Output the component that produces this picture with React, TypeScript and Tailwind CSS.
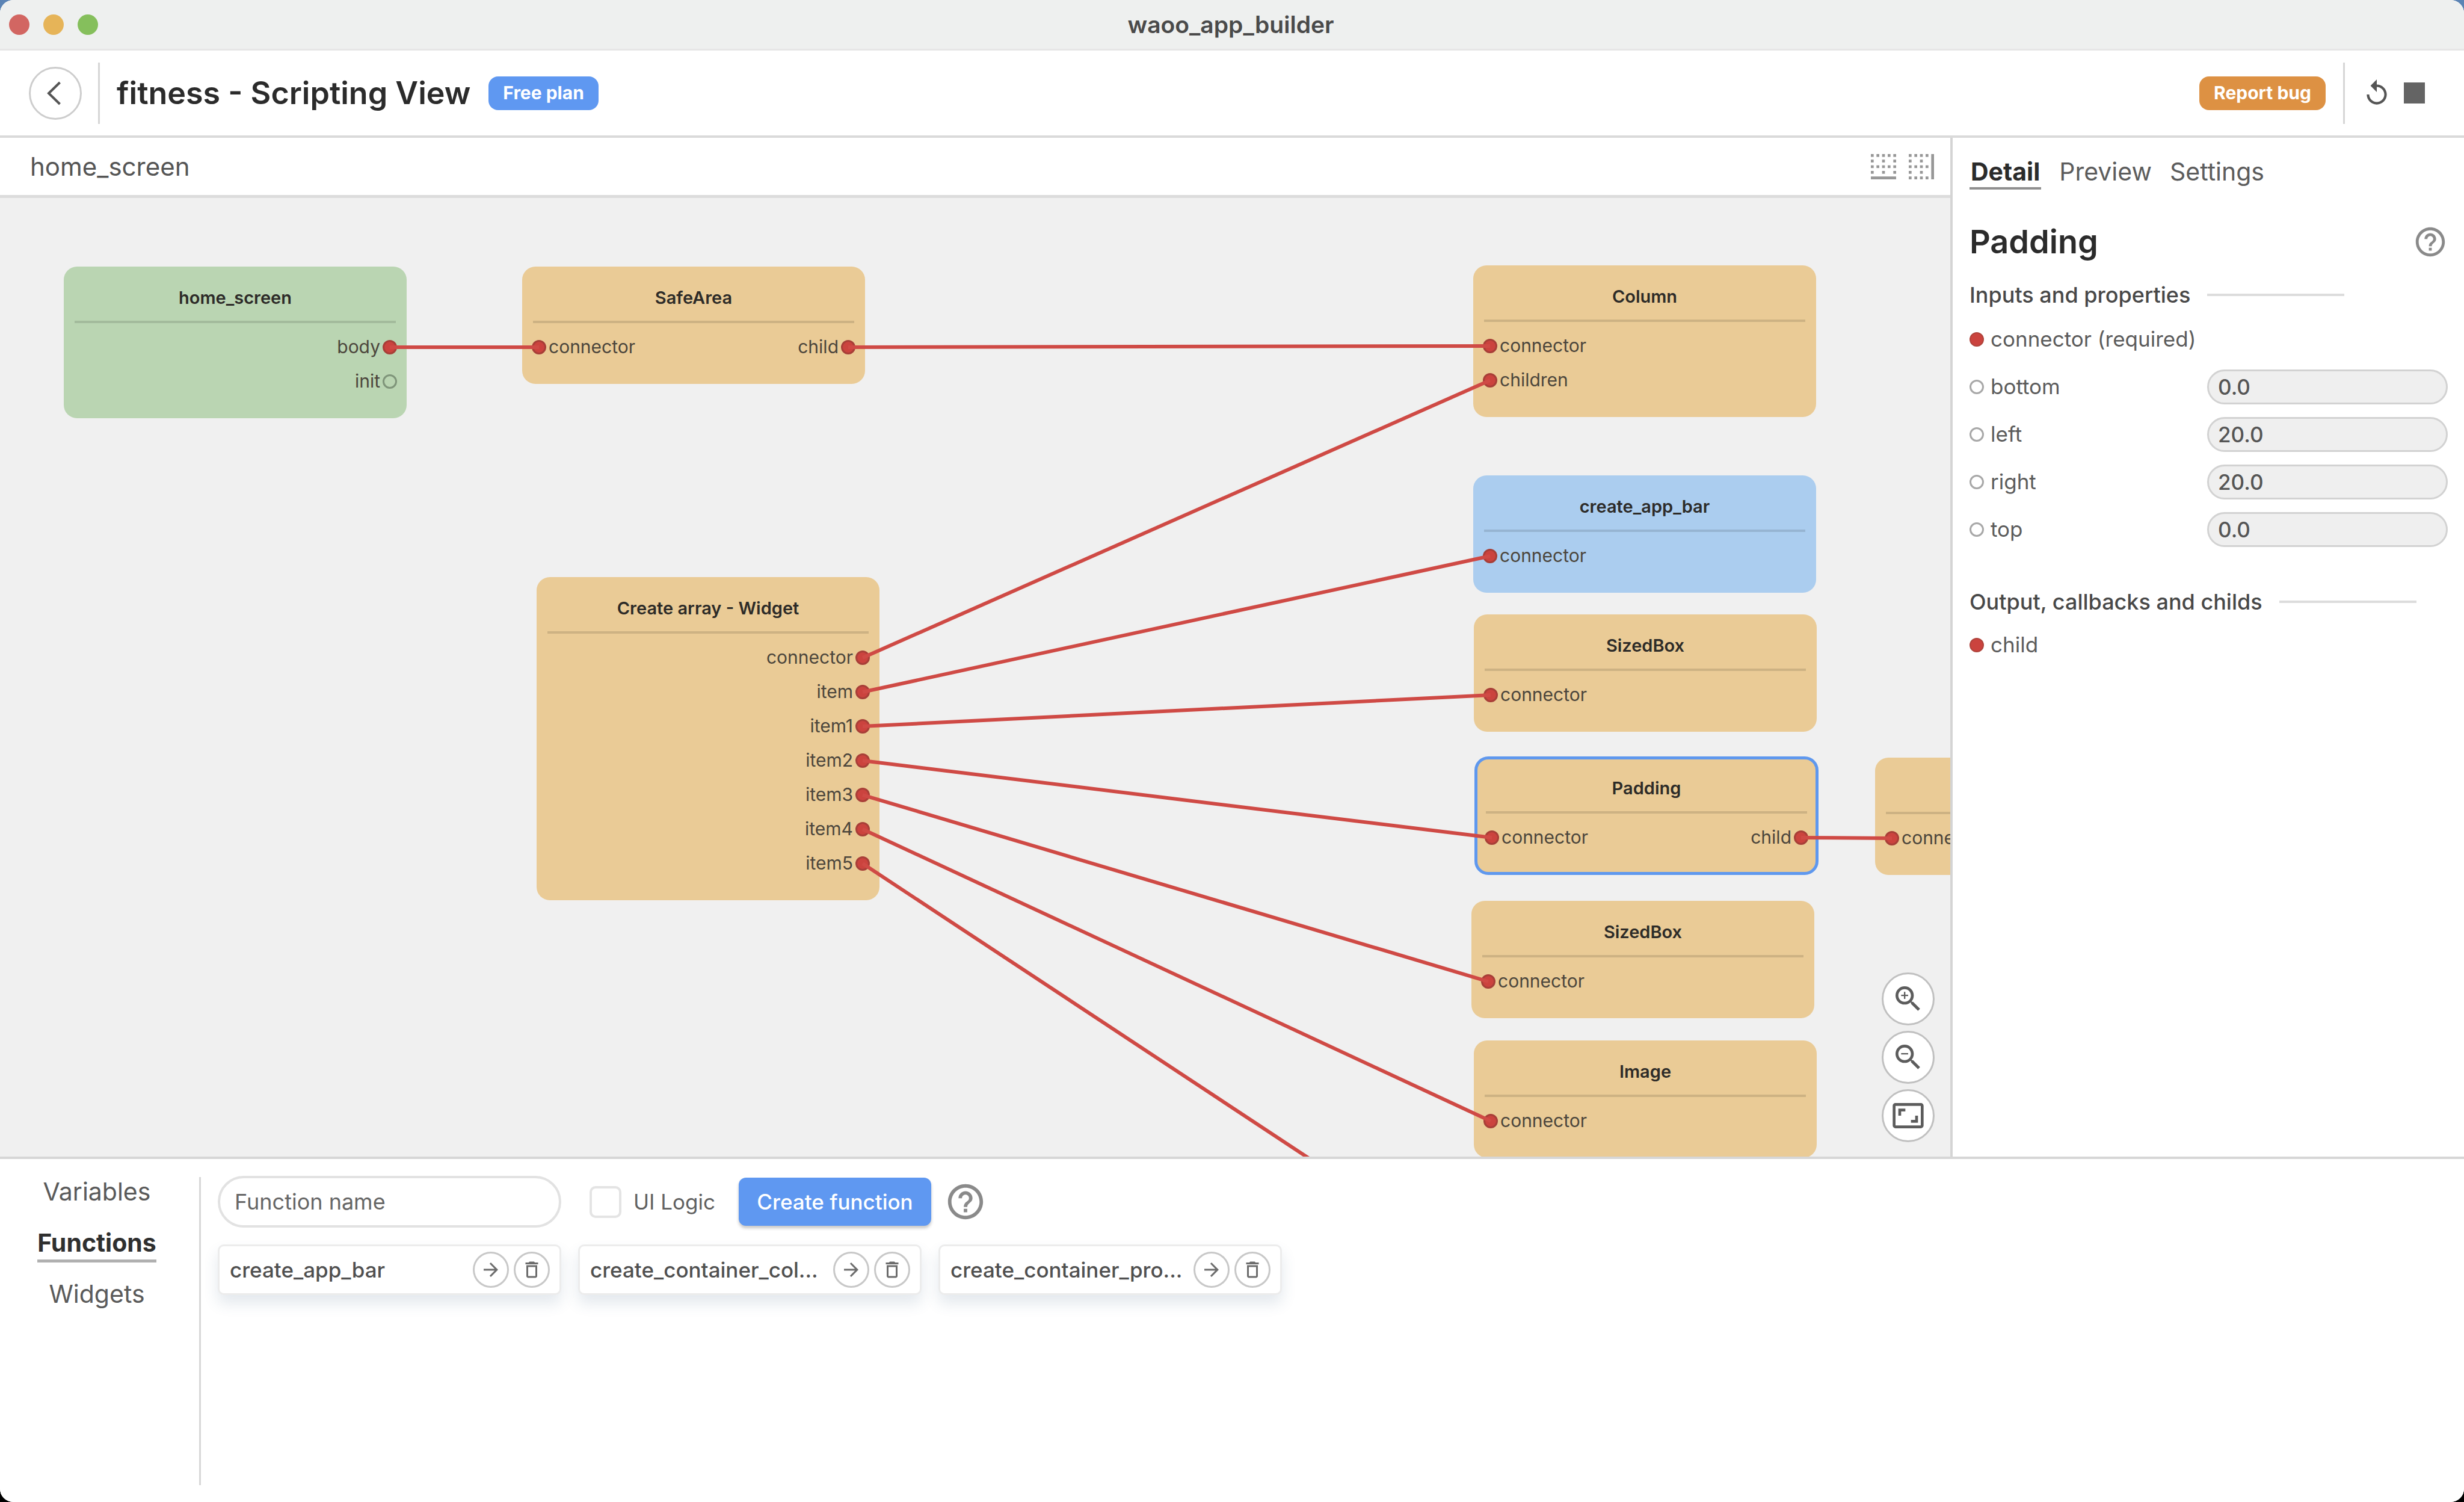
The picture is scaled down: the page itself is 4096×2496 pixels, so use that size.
import React, { useState } from "react";
import {
  MdArrowForward,
  MdAspectRatio,
  MdBorderBottom,
  MdBorderRight,
  MdDeleteOutline,
  MdHelpOutline,
  MdReplay,
  MdZoomIn,
  MdZoomOut,
} from "react-icons/md";

type Port = { name: string; linked?: boolean };

type GraphNode = {
  id: string;
  title?: string;
  x: number;
  y: number;
  tone: "green" | "orange" | "blue";
  selected?: boolean;
  inputs?: Port[];
  outputs?: Port[];
};

const connector: Port[] = [{ name: "connector", linked: true }];

const nodes: GraphNode[] = [
  {
    id: "home",
    title: "home_screen",
    x: 106,
    y: 114,
    tone: "green",
    outputs: [{ name: "body", linked: true }, { name: "init" }],
  },
  {
    id: "safe",
    title: "SafeArea",
    x: 868,
    y: 114,
    tone: "orange",
    inputs: connector,
    outputs: [{ name: "child", linked: true }],
  },
  {
    id: "column",
    title: "Column",
    x: 2449,
    y: 112,
    tone: "orange",
    inputs: [
      { name: "connector", linked: true },
      { name: "children", linked: true },
    ],
  },
  { id: "appbar", title: "create_app_bar", x: 2449, y: 461, tone: "blue", inputs: connector },
  {
    id: "array",
    title: "Create array - Widget",
    x: 892,
    y: 630,
    tone: "orange",
    outputs: ["connector", "item", "item1", "item2", "item3", "item4", "item5"].map((name) => ({
      name,
      linked: true,
    })),
  },
  { id: "sized1", title: "SizedBox", x: 2450, y: 692, tone: "orange", inputs: connector },
  {
    id: "padding",
    title: "Padding",
    x: 2452,
    y: 929,
    tone: "orange",
    selected: true,
    inputs: connector,
    outputs: [{ name: "child", linked: true }],
  },
  { id: "next", x: 3117, y: 930, tone: "orange", inputs: connector },
  { id: "sized2", title: "SizedBox", x: 2446, y: 1168, tone: "orange", inputs: connector },
  { id: "image", title: "Image", x: 2450, y: 1400, tone: "orange", inputs: connector },
];

const edges: [string, number, string, number][] = [
  ["home", 0, "safe", 0],
  ["safe", 0, "column", 0],
  ["array", 0, "column", 1],
  ["array", 1, "appbar", 0],
  ["array", 2, "sized1", 0],
  ["array", 3, "padding", 0],
  ["array", 4, "sized2", 0],
  ["array", 5, "image", 0],
  ["padding", 0, "next", 0],
];

const toneClass = {
  green: "bg-[#bad5b2]",
  orange: "bg-[#eacb96]",
  blue: "bg-[#abcdef]",
};

function portPoint(id: string, index: number, side: "in" | "out") {
  const node = nodes.find((n) => n.id === id)!;
  return { x: node.x + (side === "in" ? 28 : 542), y: node.y + 134 + index * 57 };
}

function PortDot({ linked }: { linked?: boolean }) {
  return (
    <span
      className={
        linked
          ? "size-6 shrink-0 rounded-full border-[3px] border-[#a83f38] bg-[#cb433e]"
          : "size-6 shrink-0 rounded-full border-[3px] border-[#7f957a]"
      }
    />
  );
}

function NodeCard({ node }: { node: GraphNode }) {
  return (
    <section
      className={`absolute w-[570px] rounded-[22px] pb-[33px] text-[30px] ${toneClass[node.tone]} ${
        node.selected ? "outline-[5px] -outline-offset-4 outline-[#5f98ee]" : ""
      }`}
      style={{ left: node.x, top: node.y }}
    >
      <h3 className="flex h-[90px] items-center justify-center pt-3 text-[29px] leading-none font-semibold text-[#2d2b28]">
        {node.title}
      </h3>
      <div className="mx-[18px] mb-[11px] h-1 bg-black/12" />
      <div className="flex justify-between px-4 text-[#4c463c]">
        <ul>
          {node.inputs?.map((p) => (
            <li key={p.name} className="flex h-[57px] items-center gap-1">
              <PortDot linked={p.linked} />
              {p.name}
            </li>
          ))}
        </ul>
        <ul>
          {node.outputs?.map((p) => (
            <li key={p.name} className="flex h-[57px] items-center justify-end gap-1">
              {p.name}
              <PortDot linked={p.linked} />
            </li>
          ))}
        </ul>
      </div>
    </section>
  );
}

function Connections() {
  const start = portPoint("array", 6, "out");
  return (
    <svg className="pointer-events-none absolute inset-0 h-full w-full" stroke="#cf4a45" strokeWidth={6}>
      {edges.map(([from, fi, to, ti]) => {
        const a = portPoint(from, fi, "out");
        const b = portPoint(to, ti, "in");
        return <line key={`${from}${fi}`} x1={a.x} y1={a.y} x2={b.x} y2={b.y} />;
      })}
      <line x1={start.x} y1={start.y} x2={2320} y2={1691} />
    </svg>
  );
}

function TitleBar() {
  return (
    <header className="grid h-[84px] grid-cols-[1fr_auto_1fr] items-center border-b-[3px] border-[#e6e6e6] bg-[#eef0ef] px-[15px]">
      <div className="flex gap-[23px]">
        <button aria-label="Close" className="size-[34px] rounded-full bg-[#d26662]" />
        <button aria-label="Minimise" className="size-[34px] rounded-full bg-[#e6b458]" />
        <button aria-label="Zoom" className="size-[34px] rounded-full bg-[#85bf5c]" />
      </div>
      <h1 className="pr-1 text-[39px] leading-none font-semibold text-[#4a4a4a]">waoo_app_builder</h1>
    </header>
  );
}

function Toolbar() {
  return (
    <div className="flex h-[145px] items-center justify-between border-b-4 border-[#dadada] bg-white pr-[65px] pl-12">
      <div className="flex items-center">
        <button
          aria-label="Back"
          className="flex size-[88px] items-center justify-center rounded-full border-[3px] border-[#cdcdcd]"
        >
          <svg viewBox="0 0 24 40" className="mr-1 h-10 w-6" fill="none" stroke="#555" strokeWidth={4}>
            <path d="M21.500 2 3 20l18.500 18" />
          </svg>
        </button>
        <div className="ml-[27px] h-[102px] w-[3px] bg-[#d6d6d6]" />
        <h2 className="ml-7 text-[52px] leading-none font-semibold text-[#2b2b2b]">fitness - Scripting View</h2>
        <span className="ml-[30px] flex h-14 items-center rounded-2xl bg-[#5f98f1] px-6 text-[30px] font-bold text-white">
          Free plan
        </span>
      </div>
      <div className="flex items-center">
        <button className="h-14 rounded-2xl bg-[#dd9143] px-6 text-[30px] font-bold text-white">Report bug</button>
        <div className="ml-[29px] h-[102px] w-[3px] bg-[#d6d6d6]" />
        <button aria-label="Restart" className="ml-[28px] text-[50px] text-[#555]">
          <MdReplay />
        </button>
        <button aria-label="Stop" className="ml-5 size-[35px] bg-[#646464]" />
      </div>
    </div>
  );
}

function ZoomButton({ label, children }: { label: string; children: React.ReactNode }) {
  return (
    <button
      aria-label={label}
      className="flex size-[88px] items-center justify-center rounded-full border-[3px] border-[#c0c0c0] bg-white text-[56px] text-[#5c5c5c]"
    >
      {children}
    </button>
  );
}

function Canvas() {
  return (
    <div className="flex min-w-0 flex-1 flex-col">
      <div className="flex h-[100px] items-center justify-between border-b-[5px] border-[#dcdcdc] bg-white pr-5 pl-[50px]">
        <h2 className="text-[42px] leading-none text-[#555]">home_screen</h2>
        <div className="flex gap-[7px] text-[56px] text-[#979797]">
          <button aria-label="Dock bottom">
            <MdBorderBottom />
          </button>
          <button aria-label="Dock right">
            <MdBorderRight />
          </button>
        </div>
      </div>
      <div className="relative flex-1 overflow-hidden bg-[#f0f0f0]">
        {nodes.map((n) => (
          <NodeCard key={n.id} node={n} />
        ))}
        <Connections />
        <div className="absolute right-[26px] bottom-6 flex flex-col gap-[9px]">
          <ZoomButton label="Zoom in">
            <MdZoomIn />
          </ZoomButton>
          <ZoomButton label="Zoom out">
            <MdZoomOut />
          </ZoomButton>
          <ZoomButton label="Fit to screen">
            <MdAspectRatio />
          </ZoomButton>
        </div>
      </div>
    </div>
  );
}

function SectionHeading({ children }: { children: React.ReactNode }) {
  return (
    <h4 className="flex h-11 items-center gap-[28px] text-[36px] font-medium whitespace-nowrap text-[#484848]">
      {children}
      <span className="h-1 w-[228px] bg-[#dcdcdc]" />
    </h4>
  );
}

function PropertyDot({ linked }: { linked?: boolean }) {
  return (
    <span
      className={
        linked
          ? "size-6 rounded-full border-2 border-[#b0443c] bg-[#cb433e]"
          : "size-6 rounded-full border-[3px] border-[#a8a8a8]"
      }
    />
  );
}

const properties = [
  { name: "bottom", value: "0.0" },
  { name: "left", value: "20.0" },
  { name: "right", value: "20.0" },
  { name: "top", value: "0.0" },
];

function DetailPanel() {
  const [tab, setTab] = useState("Detail");
  return (
    <aside className="w-[854px] shrink-0 border-l-4 border-[#d4d4d4] bg-white pr-[27px] pl-7 text-[#5c5c5c]">
      <nav className="flex gap-[30px] pt-[30px] text-[41px] leading-[52px]">
        {["Detail", "Preview", "Settings"].map((t) => (
          <button
            key={t}
            onClick={() => setTab(t)}
            className={
              t === tab
                ? "border-b-4 border-[#8f8f8f] px-[2px] font-bold text-[#2b2b2b]"
                : "border-b-4 border-transparent"
            }
          >
            {t}
          </button>
        ))}
      </nav>
      <div className="mt-[55px] flex h-16 items-center justify-between">
        <h3 className="text-[54px] leading-none font-semibold text-[#2b2b2b]">Padding</h3>
        <button aria-label="Help" className="text-[58px] text-[#8a8a8a]">
          <MdHelpOutline />
        </button>
      </div>
      <div className="mt-[34px]">
        <SectionHeading>Inputs and properties</SectionHeading>
        <div className="mt-3 text-[35px]">
          <div className="flex h-[79px] items-center gap-[11px]">
            <PropertyDot linked />
            connector (required)
          </div>
          {properties.map((p) => (
            <label key={p.name} className="flex h-[79px] items-center gap-[11px]">
              <PropertyDot />
              <span className="flex-1">{p.name}</span>
              <input
                defaultValue={p.value}
                className="h-[58px] w-[400px] rounded-full border-[3px] border-[#d2d2d2] bg-[#efefef] px-[15px] font-medium text-[#555]"
              />
            </label>
          ))}
        </div>
      </div>
      <div className="mt-[59px]">
        <SectionHeading>Output, callbacks and childs</SectionHeading>
        <div className="mt-[10px] flex h-[79px] items-center gap-[11px] text-[35px]">
          <PropertyDot linked />
          child
        </div>
      </div>
    </aside>
  );
}

function FunctionCard({ name }: { name: string }) {
  return (
    <li className="flex h-[84px] w-[571px] items-center rounded-[10px] border-[3px] border-[#ececec] bg-white pr-4 pl-[17px] shadow-[0_14px_24px_rgba(60,90,130,0.14)]">
      <span className="flex-1 text-[35px] font-medium whitespace-nowrap text-[#505050]">{name}</span>
      <div className="flex gap-2 text-[36px] text-[#6c6c6c]">
        <button
          aria-label={`Open ${name}`}
          className="flex size-[60px] items-center justify-center rounded-full border-[3px] border-[#c8c8c8]"
        >
          <MdArrowForward />
        </button>
        <button
          aria-label={`Delete ${name}`}
          className="flex size-[60px] items-center justify-center rounded-full border-[3px] border-[#c8c8c8]"
        >
          <MdDeleteOutline />
        </button>
      </div>
    </li>
  );
}

function FunctionsPanel() {
  const [tab, setTab] = useState("Functions");
  return (
    <section className="flex min-h-[574px] border-t-4 border-[#d6d6d6] bg-white">
      <nav className="flex w-[331px] flex-col items-center gap-7 pt-[30px] pr-[9px] text-[41px] leading-[48px]">
        {["Variables", "Functions", "Widgets"].map((t) => (
          <button
            key={t}
            onClick={() => setTab(t)}
            className={
              t === tab
                ? "border-b-[5px] border-[#b0b0b0] pb-1 font-bold text-[#2f2f2f]"
                : "border-b-[5px] border-transparent pb-1 text-[#5a5a5a]"
            }
          >
            {t}
          </button>
        ))}
      </nav>
      <div className="mt-[30px] mb-7 w-[3px] bg-[#d8d8d8]" />
      <div className="pt-7 pl-7">
        <form className="flex items-center text-[35px]" onSubmit={(e) => e.preventDefault()}>
          <input
            aria-label="Function name"
            placeholder="Function name"
            className="h-[86px] w-[571px] rounded-full border-4 border-[#e2e2e2] px-6 text-[36px] placeholder:text-[#666]"
          />
          <label className="ml-[47px] flex items-center gap-[20px] text-[#606060]">
            <input type="checkbox" className="size-[53px] appearance-none rounded-[10px] border-4 border-[#e4e4e4]" />
            UI Logic
          </label>
          <button className="ml-[39px] h-20 w-[320px] rounded-[12px] bg-[#5f98f1] font-medium text-white shadow-[0_4px_5px_rgba(0,0,0,0.22)]">
            Create function
          </button>
          <button type="button" aria-label="Help" className="ml-[22px] text-[70px] text-[#8a8a8a]">
            <MdHelpOutline />
          </button>
        </form>
        <ul className="mt-7 flex gap-7">
          <FunctionCard name="create_app_bar" />
          <FunctionCard name="create_container_col..." />
          <FunctionCard name="create_container_pro..." />
        </ul>
      </div>
    </section>
  );
}

export default function App() {
  return (
    <div className="min-h-screen bg-linear-to-b from-[#5b84b5] to-black font-['Inter',sans-serif]">
      <div className="flex min-h-screen flex-col overflow-hidden rounded-[22px] bg-white">
        <TitleBar />
        <Toolbar />
        <main className="flex flex-1">
          <Canvas />
          <DetailPanel />
        </main>
        <FunctionsPanel />
      </div>
    </div>
  );
}
